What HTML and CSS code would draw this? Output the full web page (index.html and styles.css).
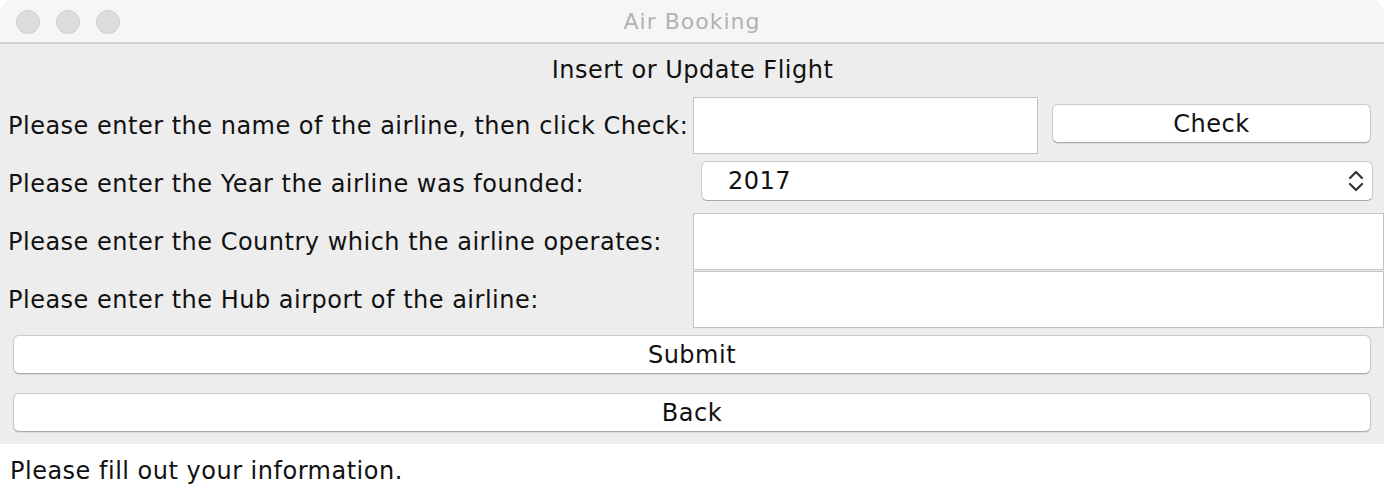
FILE: index.html
```html
<!DOCTYPE html>
<html>
<head>
<meta charset="utf-8">
<title>Air Booking</title>
<link rel="stylesheet" href="styles.css">
</head>
<body>
<div class="window">
  <div class="titlebar">
    <div class="lights">
      <span class="light"></span>
      <span class="light"></span>
      <span class="light"></span>
    </div>
    <div class="title">Air Booking</div>
  </div>
  <div class="content">
    <div class="heading">Insert or Update Flight</div>
    <div class="row row1">
      <div class="label">Please enter the name of the airline, then click Check:</div>
      <div class="cell cell1">
        <div class="field field-short"></div>
        <div class="btn btn-check">Check</div>
      </div>
    </div>
    <div class="row row2">
      <div class="label">Please enter the Year the airline was founded:</div>
      <div class="cell">
        <div class="combo">
          <span class="combo-value">2017</span>
          <svg class="chev" width="16" height="22" viewBox="0 0 16 22">
            <path d="M2 8 L8 2 L14 8" fill="none" stroke="#333" stroke-width="2.2" stroke-linecap="round" stroke-linejoin="round"/>
            <path d="M2 14 L8 20 L14 14" fill="none" stroke="#333" stroke-width="2.2" stroke-linecap="round" stroke-linejoin="round"/>
          </svg>
        </div>
      </div>
    </div>
    <div class="row row3">
      <div class="label">Please enter the Country which the airline operates:</div>
      <div class="cell"><div class="field field-wide"></div></div>
    </div>
    <div class="row row4">
      <div class="label">Please enter the Hub airport of the airline:</div>
      <div class="cell"><div class="field field-wide"></div></div>
    </div>
    <div class="btn btn-wide btn-submit">Submit</div>
    <div class="btn btn-wide btn-back">Back</div>
  </div>
  <div class="status">Please fill out your information.</div>
</div>
</body>
</html>
```

FILE: styles.css
```css
html, body {
  margin: 0;
  padding: 0;
  background: #ffffff;
}
body {
  width: 1384px;
  height: 496px;
  overflow: hidden;
  font-family: "DejaVu Sans", "Liberation Sans", sans-serif;
  font-size: 24px;
  letter-spacing: 0.5px;
  color: #111;
}
.window {
  display: flex;
  flex-direction: column;
  width: 1384px;
}
.titlebar {
  position: relative;
  height: 42px;
  background: #f6f6f6;
  border-bottom: 2px solid #d2d2d2;
  border-radius: 12px 12px 0 0;
  display: flex;
  align-items: center;
  justify-content: center;
}
.lights {
  position: absolute;
  left: 16px;
  top: 10px;
  display: flex;
  gap: 16px;
}
.light {
  width: 22px;
  height: 22px;
  border-radius: 50%;
  background: #dcdcdc;
  border: 1px solid #cdcdcd;
}
.title {
  color: #b2b2b2;
  font-size: 22px;
  letter-spacing: 1px;
  margin-top: 1px;
}
.content {
  background: #ededed;
  height: 400px;
  box-sizing: border-box;
  display: flex;
  flex-direction: column;
}
.heading {
  height: 53px;
  line-height: 53px;
  text-align: center;
  padding-left: 1px;
}
.row {
  display: flex;
  align-items: stretch;
}
.label {
  width: 685px;
  padding-left: 8px;
  flex: none;
  display: flex;
  align-items: center;
  white-space: nowrap;
}
.cell {
  flex: 1;
  display: flex;
  align-items: flex-start;
}
.row1 { height: 57px; }
.row2 { height: 59px; }
.row3 { height: 58px; }
.row4 { height: 57px; }
.field {
  background: #fff;
  border: 1px solid #c3c3c3;
  box-sizing: border-box;
  height: 57px;
}
.field-short {
  width: 345px;
}
.field-wide {
  width: 691px;
}
.btn {
  background: #fff;
  border: 1px solid #c9c9c9;
  border-bottom-color: #a9a9a9;
  border-radius: 6px;
  box-sizing: border-box;
  height: 39px;
  display: flex;
  align-items: center;
  justify-content: center;
  box-shadow: 0 1px 1px rgba(0,0,0,0.08);
}
.btn-check {
  width: 319px;
  margin-left: 14px;
  margin-top: 7px;
}
.combo {
  margin-left: 8px;
  margin-top: 7px;
  width: 672px;
  height: 40px;
  box-sizing: border-box;
  background: #fff;
  border: 1px solid #cbcbcb;
  border-bottom-color: #a9a9a9;
  border-radius: 6px;
  display: flex;
  align-items: center;
  justify-content: space-between;
  padding: 0 8px 0 26px;
}
.chev {
  display: block;
}
.btn-wide {
  margin-left: 13px;
  width: 1358px;
}
.btn-submit {
  margin-top: 7px;
}
.btn-back {
  margin-top: 19px;
}
.status {
  height: 52px;
  display: flex;
  align-items: center;
  padding-left: 10px;
  padding-top: 2px;
  box-sizing: border-box;
}
```
